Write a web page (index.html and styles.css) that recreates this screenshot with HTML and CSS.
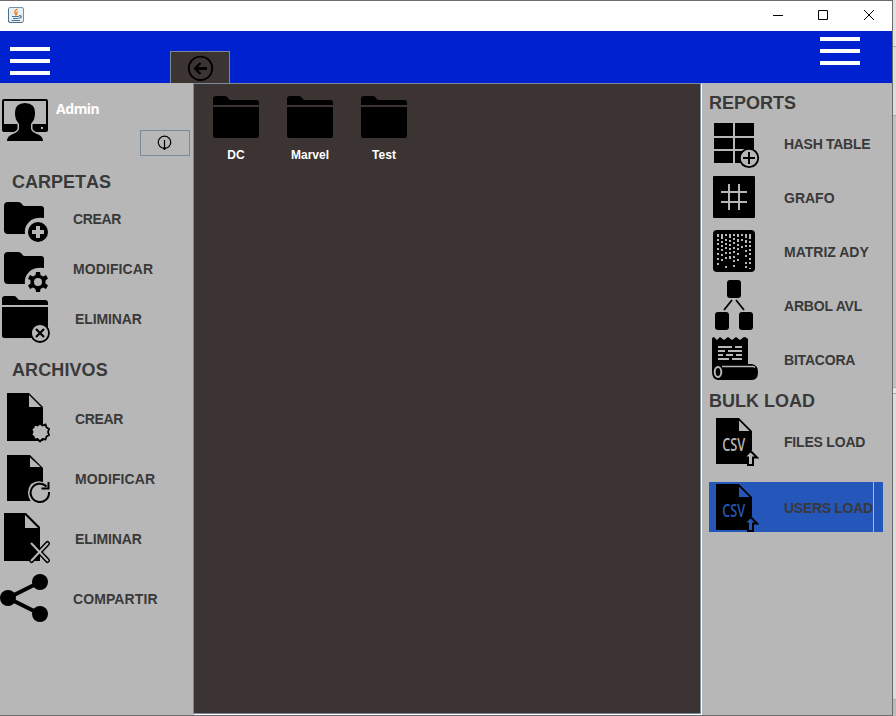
FILE: index.html
```html
<!DOCTYPE html>
<html lang="es">
<head>
<meta charset="utf-8">
<title>Admin</title>
<link rel="stylesheet" href="styles.css">
</head>
<body>
<svg width="0" height="0" class="defs">
  <defs>
    <symbol id="folder" viewBox="0 0 46 42">
      <path d="M0 9V3Q0 0 3 0H12Q14 0 15 2Q16 4 18 4H43Q46 4 46 7V9Z"/>
      <path d="M0 11H46V39.500Q46 42 43.500 42H2.500Q0 42 0 39.500Z"/>
    </symbol>
    <symbol id="csv" viewBox="0 0 50 50">
      <path d="M7 2H30L43 15V34L38 39V48H7Z"/>
      <path class="bg" d="M30 4.500V15H40.500Z"/>
      <text class="bg csv-text" x="13.300" y="35" textLength="23" lengthAdjust="spacingAndGlyphs">CSV</text>
      <path class="bg ink" stroke-width="2" d="M41.500 35L48 41.500H44V49H39V41.500H35Z"/>
    </symbol>
  </defs>
</svg>
<div class="window">
  <header class="title">
    <svg class="java" width="16" height="16" viewBox="0 0 16 16">
      <rect x=".5" y=".5" width="15" height="15" rx="1.500" fill="#e9eff3" stroke="#7791a6"/>
      <path d="M.5 2V14Q.5 15.500 2 15.500H14" fill="none" stroke="#4f708a"/>
      <path d="M9.500 2Q5.500 4.500 7 6T7.500 8.500M10 4.500Q7.500 6 9 8" fill="none" stroke="#ec7b17" stroke-width="1.300"/>
      <path d="M4 9.500H11M5 11.500H10.500M3.500 13.500H12M11 8.500Q14 8.500 13 10.500L11 11" fill="none" stroke="#48769a" stroke-width="1.200"/>
    </svg>
    <svg class="controls" width="104" height="14" viewBox="771 8 104 14" fill="none" stroke="#000">
      <path d="M773 15.500H783M818.500 10.500H827.500V19.500H818.500ZM864 10L874 20M874 10L864 20"/>
    </svg>
  </header>
  <div class="toolbar">
    <div class="burger"><i></i><i></i><i></i></div>
    <div class="tab">
      <svg width="28" height="28" viewBox="186 54 28 28" fill="none" stroke="#000">
        <circle cx="200.500" cy="68.300" r="11.700" stroke-width="1.900"/>
        <path d="M207 68.500H196" stroke-width="3"/><path d="M200.500 63L195 68.500L200.500 74" stroke-width="2.300"/>
      </svg>
    </div>
    <div class="burger right"><i></i><i></i><i></i></div>
  </div>
  <main class="content">
    <aside class="left">
      <div class="user">
        <svg width="50" height="50" viewBox="0 96 50 50">
          <path fill-rule="evenodd" d="M4 99H46Q48 99 48 101V130Q48 132 46 132H4Q2 132 2 130V101Q2 99 4 99ZM4 101V124H46V101Z"/>
          <rect class="bg" x="41" y="127" width="2" height="2"/>
          <path class="halo" d="M25 103Q35 103.500 35 112Q35.500 119 31 124V129Q32 132 37 134Q43 136 43 141H7Q7 136 13 134Q18 132 19 129V124Q14.500 119 15 112Q15 103.500 25 103Z"/>
        </svg>
        <span class="name">Admin</span>
        <button class="logout"><svg width="16" height="16" viewBox="157 135 16 16" fill="none" stroke="#000" stroke-width="1.200"><path d="M162.500 148.200A6.200 6.200 0 1 1 166.500 148.200"/><path d="M164.500 140V148.500M162.700 147.500L164.500 149.300L166.300 147.500"/></svg></button>
      </div>
      <h2 class="carpetas">CARPETAS</h2>
      <div class="row"><svg width="52" height="50" viewBox="0 194 52 50">
        <path d="M8 202H18Q21 202 22.500 205L24 206H41Q44 206 44 209V218Q34 217 29 222Q24 227 25 234H8Q4 234 4 230V206Q4 202 8 202Z"/>
        <circle cx="38" cy="232" r="10"/><path class="bg" d="M36 226H40V230H44V234H40V238H36V234H32V230H36Z"/>
      </svg><span class="crear">CREAR</span></div>
      <div class="row"><svg width="52" height="50" viewBox="0 244 52 50">
        <path d="M8 252H18Q21 252 22.500 255L24 256H41Q44 256 44 259V268Q34 267 29 272Q24 277 25 284H8Q4 284 4 280V256Q4 252 8 252Z"/>
        <path d="M36 272H40L40.500 275L43 276.500L46 275L48 278.500L45.500 280.500V283.500L48 285.500L46 289L43 287.500L40.500 289L40 292H36L35.500 289L33 287.500L30 289L28 285.500L30.500 283.500V280.500L28 278.500L30 275L33 276.500L35.500 275Z"/><circle class="bg" cx="38" cy="282" r="4"/>
      </svg><span class="modificar">MODIFICAR</span></div>
      <div class="row wide"><svg width="52" height="50" viewBox="0 294 52 50">
        <use href="#folder" x="2" y="296" width="46" height="42"/>
        <circle class="bg ink" cx="40" cy="333" r="9" stroke-width="1.800"/><path class="line" stroke-width="2.200" d="M36 329L44 337M44 329L36 337"/>
      </svg><span class="eliminar">ELIMINAR</span></div>
      <h2 class="archivos">ARCHIVOS</h2>
      <div class="row tall wide"><svg width="52" height="60" viewBox="0 389 52 60">
        <path d="M7 393H29L43 407V441H7Z"/><path class="bg" d="M29 395V407H41Z"/>
        <path class="bg ink" stroke-width="1.800" d="M40 423.500L42.500 425.500L45.500 424.500L46.500 427.500L49 429L48 432L49 435L46.500 436.500L45.500 439.500L42.500 439L40 441.500L37.500 439L34.500 439.500L33.500 436.500L31.500 435L32.500 432L31.500 429L33.500 427.500L34.500 424.500L37.500 425.500Z"/>
      </svg><span class="crear">CREAR</span></div>
      <div class="row tall wide"><svg width="52" height="60" viewBox="0 449 52 60">
        <path d="M7 455H30L43 468V501H7Z"/><path class="bg" d="M30 457.500V467H40.500Z"/>
        <path class="bg" d="M31 484Q38 479 45 483V502H31Q25 492 31 484Z"/>
        <path class="line" stroke-width="2" d="M49 492A9.200 9.200 0 1 1 46.500 486.500M48.500 482V488.500H41.500"/>
      </svg><span class="modificar">MODIFICAR</span></div>
      <div class="row tall wide"><svg width="52" height="60" viewBox="0 509 52 60">
        <path d="M4 513H26L40 527V561H4Z"/><path class="bg" d="M25 515V528H38Z"/>
        <path class="line" stroke-linecap="round" stroke-width="5" d="M31.500 543.500L47.500 560.500M47.500 543.500L31.500 560.500"/><path class="line gray" stroke-linecap="round" stroke-width="2" d="M31.500 543.500L47.500 560.500M47.500 543.500L31.500 560.500"/>
      </svg><span class="eliminar">ELIMINAR</span></div>
      <div class="row tall"><svg width="52" height="60" viewBox="0 569 52 60">
        <path class="line" stroke-width="4" d="M40 582L8 598L40 614"/><circle cx="40" cy="582" r="8"/><circle cx="8" cy="598" r="8"/><circle cx="40" cy="614" r="8"/>
      </svg><span class="modificar">COMPARTIR</span></div>
    </aside>
    <section class="files">
      <figure><svg width="46" height="42"><use href="#folder"/></svg><figcaption>DC</figcaption></figure>
      <figure><svg width="46" height="42"><use href="#folder"/></svg><figcaption>Marvel</figcaption></figure>
      <figure><svg width="46" height="42"><use href="#folder"/></svg><figcaption>Test</figcaption></figure>
    </section>
    <aside class="reports">
      <h2 class="first">REPORTS</h2>
      <div class="row"><svg width="52" height="54" viewBox="709 117 52 54">
        <path d="M714 123H733V136H714ZM735 123H754V136H735ZM714 138H733V149H714ZM735 138H754V149H735ZM714 151H733V163H714ZM735 151H754V163H735Z"/>
        <circle class="bg ink" cx="749" cy="158" r="9.200" stroke-width="1.800"/><path class="line" stroke-width="2" d="M749 152V164M743 158H755"/>
      </svg><span class="hash">HASH TABLE</span></div>
      <div class="row"><svg width="52" height="54" viewBox="709 171 52 54">
        <rect x="713" y="176" width="42" height="42" rx="1"/><path class="line gray" stroke-width="2" d="M729 184V210M739 184V210M721 192H747M721 202H747"/>
      </svg><span>GRAFO</span></div>
      <div class="row"><svg width="52" height="54" viewBox="709 225 52 54">
        <rect x="713" y="230" width="42" height="42" rx="4"/>
        <g class="line gray" stroke-width="2">
          <path stroke-dasharray="3 2 2 2 2 3 2 3 2 3 2 3 2 3" d="M718 234V267"/>
          <path stroke-dasharray="5 2 2 2 2 2 2 3 2 3 2 20" d="M722 234V262"/>
          <path stroke-dasharray="2 3 2 2 2 2 2 3 2 3 2 7 2 9" d="M726 234V268"/>
          <path stroke-dasharray="4 2 2 2 2 2 2 2 2 2 3 20" d="M730 234V261"/>
          <path stroke-dasharray="2 2 2 2 2 3 2 2 2 3 2 2 2 3 2 9" d="M734 234V268"/>
          <path stroke-dasharray="3 2 3 2 2 2 2 3 2 4 2 20" d="M738 234V262"/>
          <path stroke-dasharray="2 3 2 5 2 20" d="M742 234V262"/>
          <path stroke-dasharray="4 2 3 2 2 3 2 3 2 5 2 2 2 9" d="M746 234V268"/>
          <path stroke-dasharray="5 2 2 2 2 2 2 2 2 3 2 2 2 4 2 9" d="M750 234V269"/>
        </g>
      </svg><span>MATRIZ ADY</span></div>
      <div class="row"><svg width="52" height="54" viewBox="709 279 52 54">
        <rect x="727" y="280" width="14" height="18" rx="3"/><rect x="715" y="312" width="14" height="18" rx="3"/><rect x="739" y="312" width="14" height="18" rx="3"/><path class="line" stroke-width="1.800" d="M732 300L724 310M736 300L744 310"/>
      </svg><span class="tight">ARBOL AVL</span></div>
      <div class="row"><svg width="52" height="54" viewBox="709 333 52 54">
        <path d="M712 338L714 337L717 340L720 337L724 340L728 337L732 340L736 337L740 340L744 337L746 337.500L748 339V364H752Q758 365 758 372Q758 380 752 380H718Q712 379 712 372Z"/>
        <path class="line gray" stroke-width="2" d="M718 347H732M735 347H742M718 351H725M728 351H742M718 355H723M726 355H733M736 355H742M718 359H729M732 359H742"/>
        <path class="line gray" stroke-width="1.500" d="M722 366.500H753Q754 366.500 755 367.500"/><ellipse cx="718" cy="372" rx="3.300" ry="5" class="line gray" stroke-width="2"/><circle cx="718" cy="372" r="2"/>
      </svg><span class="tight">BITACORA</span></div>
      <h2 class="bulk">BULK LOAD</h2>
      <div class="row csv"><svg width="50" height="50"><use href="#csv"/></svg><span class="tight">FILES LOAD</span></div>
      <div class="row csv selected"><svg width="50" height="50"><use href="#csv"/></svg><span class="hash">USERS LOAD</span></div>
    </aside>
  </main>
</div>
</body>
</html>
```
FILE: styles.css
```css
* { box-sizing: border-box; }
body {
  margin: 0;
  width: 896px;
  height: 716px;
  overflow: hidden;
  font-family: "Liberation Sans", Arial, sans-serif;
  font-weight: bold;
  background: linear-gradient(#e2e2e2 46px, #aaa 46px 47px, #deddda 47px 115px, #a8a8a8 115px 116px, #c3c3c3 116px 387px, #aaa 387px 388px, #e3e3e3 388px 393px, #aaa 393px 394px, #dcdcdc 394px 699px, #aaa 699px 700px, #bbb 700px);
}
.defs { position: absolute; }
.window {
  --bg: #b7b7b7;
  display: flex;
  flex-direction: column;
  width: 893px;
  height: 716px;
  border: solid #6c6c6c;
  border-width: 1px 1px 1px 0;
  background: var(--bg);
}
svg { display: block; flex: none; }
.title { height: 30px; flex: none; display: flex; justify-content: space-between; padding: 6px 17px 0 8px; background: #fff; }
.controls { margin-top: 1px; }
.toolbar { height: 52px; flex: none; display: flex; background: #0021d0; }
.burger { width: 40px; height: 28px; margin: 16px 0 0 10px; display: flex; flex-direction: column; justify-content: space-between; }
.burger i { height: 4px; background: #fff; }
.burger.right { margin: 6px 32px 0 auto; }
.tab { width: 60px; height: 32px; margin: 20px 0 0 120px; padding: 2px 0 0 15px; background: #3c3433; border: 1px solid #7a8a99; border-bottom: 0; }
.content { flex: 1; display: grid; grid-template-columns: 193px 509px 190px; min-height: 0; }
.bg { fill: var(--bg); }
.ink { stroke: #000; }
.line { fill: none; stroke: #000; }
.line.gray { stroke: var(--bg); }
.halo { stroke: var(--bg); stroke-width: 3px; paint-order: stroke; }
.user { height: 81px; display: grid; grid-template-columns: 50px 1fr; padding-top: 13px; }
.name { color: #fff; font: bold 14px/20px "Noto Sans", sans-serif; letter-spacing: -.45px; padding: 3px 0 0 6px; }
.user svg { grid-row: 1 / 3; }
.logout { grid-column: 2; justify-self: end; align-self: end; width: 50px; height: 26px; margin: 0 3px 8px 0; padding: 0; border: 1px solid #7a8a99; background: none; }
.logout svg { margin: 0 0 0 16px; }
h2 { margin: 0; color: #393939; font-size: 18px; line-height: 20px; font-kerning: none; }
.carpetas { height: 30px; padding: 8px 0 0 12px; }
.archivos { height: 45px; padding: 16px 0 0 12px; letter-spacing: .1px; }
.row { display: flex; align-items: center; height: 50px; gap: 21px; color: #393939; font-size: 14px; white-space: nowrap; }
.wide { gap: 23px; }
.tall { height: 60px; }
.crear { letter-spacing: -.35px; }
.modificar { letter-spacing: .1px; }
.eliminar { letter-spacing: -.1px; }
.hash { letter-spacing: -.3px; }
.tight { letter-spacing: -.2px; }
.files { display: flex; align-items: flex-start; gap: 28px; padding: 12px 19px; background: #3c3433; border: 1px solid #7a8a99; border-right-color: #fff; border-bottom-color: #fff; box-shadow: inset -1px -1px #7a8a99; }
figure { margin: 0; width: 46px; }
figcaption { color: #fff; font-size: 12px; line-height: 14px; text-align: center; margin-top: 10px; }
.reports { padding-left: 7px; }
.reports .row { height: 54px; gap: 23px; }
.first { height: 34px; padding-top: 10px; }
.bulk { height: 29px; padding-top: 4px; }
.reports .csv { height: 50px; width: 174px; gap: 25px; }
.csv span { padding-top: 2px; }
.csv-text { font: 600 18px "Open Sans", sans-serif; }
.reports .selected { --bg: #2556ba; margin-top: 16px; background: linear-gradient(to right, transparent 164px, #a3b8dd 164px 165px, transparent 165px) #2556ba; }
```
